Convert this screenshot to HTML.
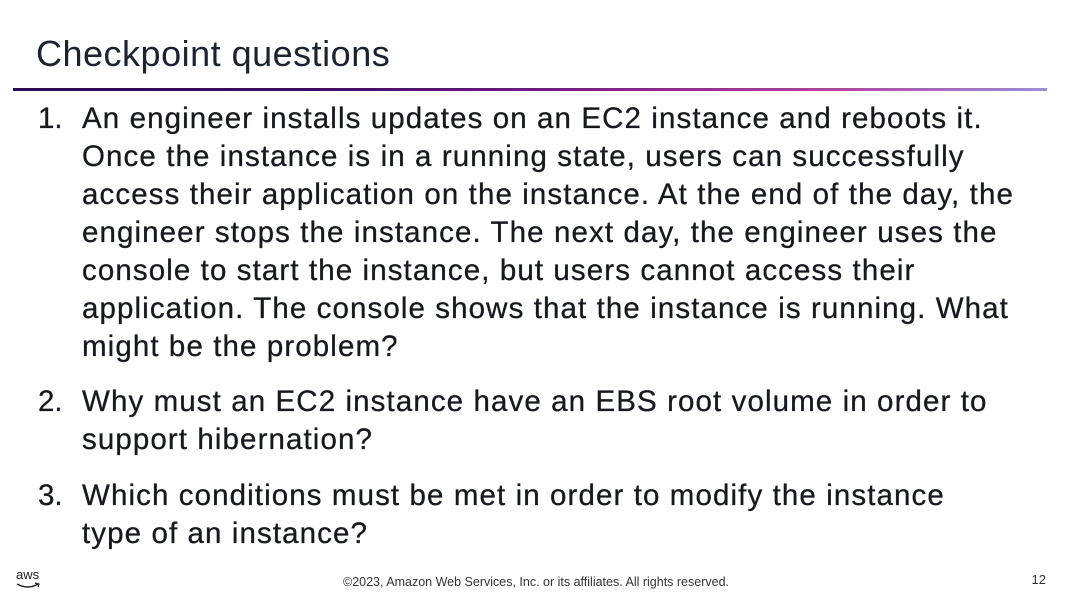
<!DOCTYPE html>
<html><head><meta charset="utf-8"><style>
body{margin:0;width:1072px;height:600px;background:#fff;position:relative;overflow:hidden;font-family:"Liberation Sans",sans-serif;color:#16191f}
.t{position:absolute;left:36px;top:33px;font-size:36px;color:#1b2330;letter-spacing:0.5px}
.bar{position:absolute;left:13px;top:88px;width:1034px;height:3px;background:linear-gradient(90deg,#2a0a55 0%,#3f0c66 30%,#7a1f86 55%,#b3409c 78%,#9a8fd8 100%)}
.q{position:absolute;left:0;font-size:29.5px;line-height:38px;white-space:nowrap;letter-spacing:1.1px;-webkit-text-stroke:0.3px #16191f}
.q .n{position:absolute;left:38px;letter-spacing:0}
.q .x{position:absolute;left:82px}
.f{position:absolute;top:575px;left:0;width:1072px;text-align:center;font-size:12.5px;color:#333}
.pg{position:absolute;right:26px;top:572px;font-size:13px;color:#333}
</style></head><body>
<div class="t">Checkpoint questions</div>
<div class="bar"></div>
<div class="q" style="top:100px"><span class="n">1.</span><span class="x">An engineer installs updates on an EC2 instance and reboots it.<br>Once the instance is in a running state, users can successfully<br>access their application on the instance. At the end of the day, the<br>engineer stops the instance. The next day, the engineer uses the<br>console to start the instance, but users cannot access their<br>application. The console shows that the instance is running. What<br>might be the problem?</span></div>
<div class="q" style="top:383px"><span class="n">2.</span><span class="x">Why must an EC2 instance have an EBS root volume in order to<br>support hibernation?</span></div>
<div class="q" style="top:477px"><span class="n">3.</span><span class="x">Which conditions must be met in order to modify the instance<br>type of an instance?</span></div>
<div style="position:absolute;left:16px;top:568px;font-size:13px;color:#222;line-height:13px">aws</div>
<svg style="position:absolute;left:16px;top:582px" width="26" height="8"><path d="M1 2 Q12 8 22 2" stroke="#222" stroke-width="1.4" fill="none"/><path d="M19 1 L23 2 L22 5" stroke="#222" stroke-width="1.2" fill="none"/></svg>
<div class="f">©2023, Amazon Web Services, Inc. or its affiliates. All rights reserved.</div>
<div class="pg">12</div>
</body></html>
